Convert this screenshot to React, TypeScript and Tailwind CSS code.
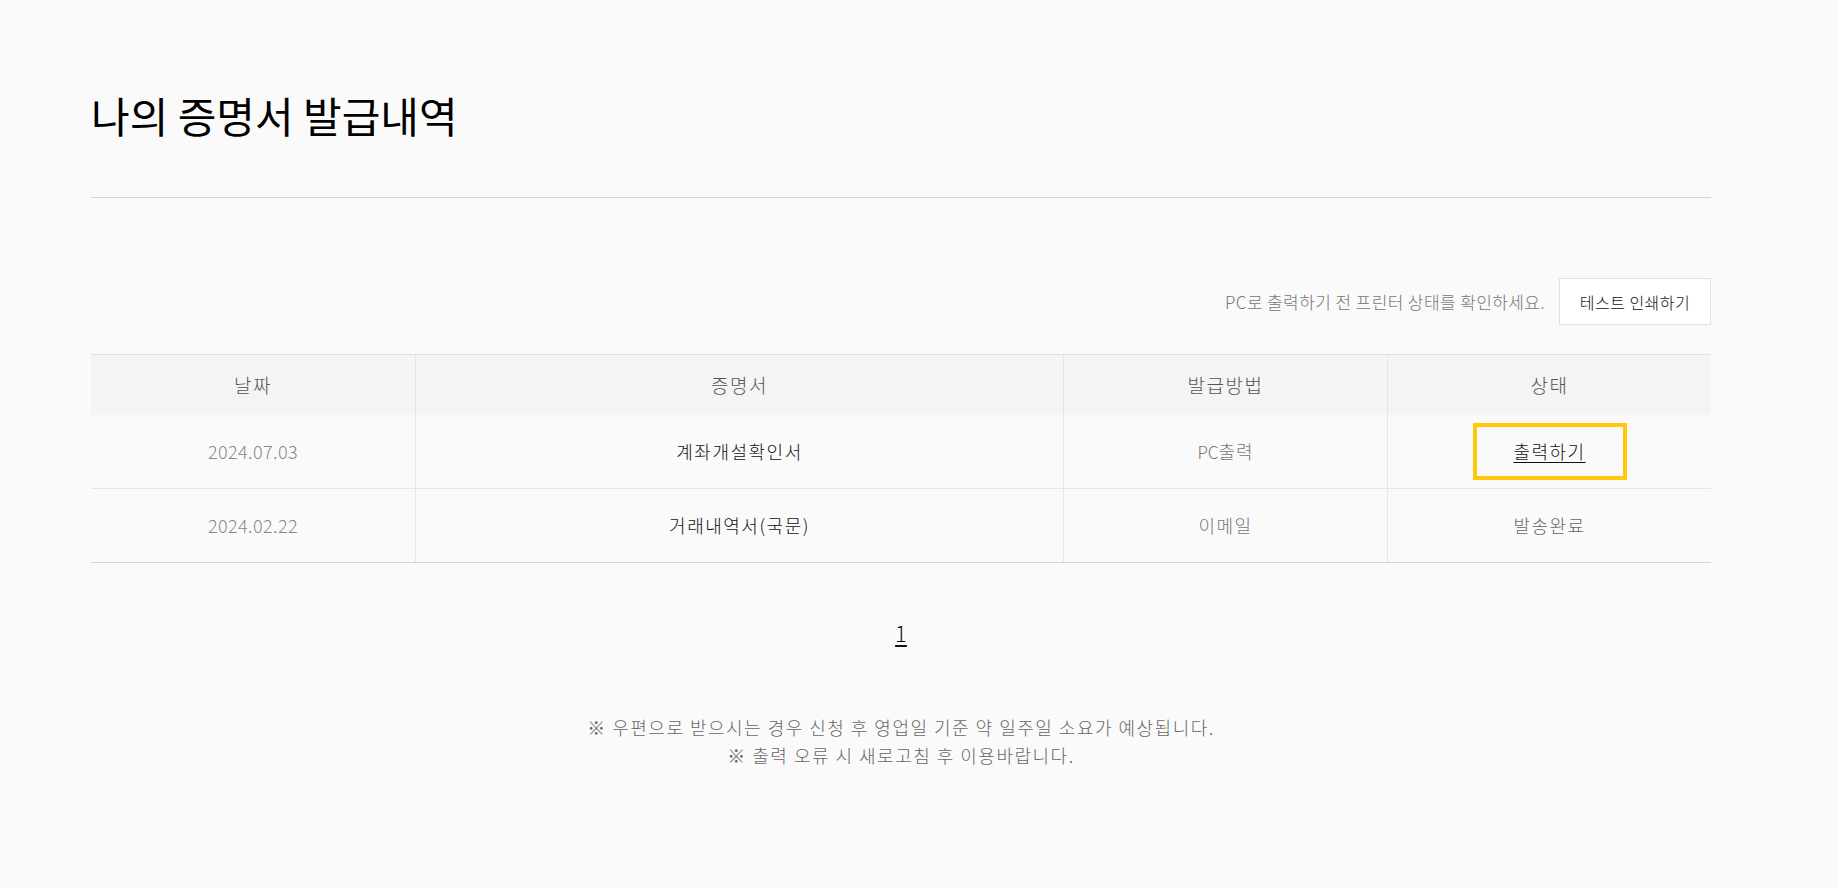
import React from "react";

const rows = [
  { date: "2024.07.03", name: "계좌개설확인서", method: "PC출력", status: "print" },
  { date: "2024.02.22", name: "거래내역서(국문)", method: "이메일", status: "발송완료" },
];

function Method({ value }: { value: string }) {
  if (value.startsWith("PC")) {
    return (
      <span className="tracking-[0px]">
        <span className="text-[17px] tracking-[0px]">PC</span>
        <span className="tracking-[1px]">{value.slice(2)}</span>
      </span>
    );
  }
  return <span>{value}</span>;
}

export default function App() {
  return (
    <div className="min-h-screen bg-[#fafafa] font-['Noto_Sans_CJK_KR','Noto_Sans',sans-serif] text-[#111]">
      <div className="ml-[91px] w-[1620px] pt-[94px] pb-[100px]">
        <h1 className="text-[42px] leading-[42px] font-normal text-black">나의 증명서 발급내역</h1>
        <div className="mt-[61px] border-t border-[#d4d4d4]" />

        <div className="mt-[80px] flex items-center justify-end gap-[14px]">
          <span className="text-[17px] tracking-[0.4px] font-light text-[#777]">
            PC로 출력하기 전 프린터 상태를 확인하세요.
          </span>
          <button className="h-[47px] w-[152px] border border-[#e2e2e2] bg-white text-[16px] tracking-[0.5px] font-light text-[#111]">
            테스트 인쇄하기
          </button>
        </div>

        <div className="mt-[29px] border-t border-[#e0e0e0]">
          <div className="grid h-[60px] grid-cols-[324px_648px_324px_324px] bg-[#f4f4f4] text-[19px] tracking-[1.5px] font-light text-[#555]">
            <div className="flex items-center justify-center">날짜</div>
            <div className="flex items-center justify-center border-l border-[#e6e6e6]">증명서</div>
            <div className="flex items-center justify-center border-l border-[#e6e6e6]">발급방법</div>
            <div className="flex items-center justify-center border-l border-[#e6e6e6]">상태</div>
          </div>
          {rows.map((r, i) => (
            <div
              key={r.date}
              className={`grid h-[74px] grid-cols-[324px_648px_324px_324px] text-[18px] font-light ${
                i === rows.length - 1 ? "border-b border-[#d6d6d6]" : "border-b border-[#e6e6e6]"
              }`}
            >
              <div className="flex items-center justify-center tracking-[0.4px] text-[#888]">{r.date}</div>
              <div className="flex items-center justify-center border-l border-[#e6e6e6] tracking-[1.5px] text-[#111]">
                {r.name}
              </div>
              <div className="flex items-center justify-center border-l border-[#e6e6e6] tracking-[1.5px] text-[#777]">
                <Method value={r.method} />
              </div>
              <div className="flex items-center justify-center border-l border-[#e6e6e6] tracking-[1.5px] text-[#666]">
                {r.status === "print" ? (
                  <span className="flex h-[57px] w-[154px] items-center justify-center border-[4px] border-[#ffc80b]">
                    <span className="text-[#111] underline underline-offset-[3px]">출력하기</span>
                  </span>
                ) : (
                  r.status
                )}
              </div>
            </div>
          ))}
        </div>

        <div className="mt-[55px] flex justify-center">
          <span className="text-[22px] leading-[28px] font-light text-[#111] underline underline-offset-[3px]">1</span>
        </div>

        <div className="mt-[67px] flex flex-col items-center text-[18px] leading-[28px] tracking-[1.5px] font-light text-[#666]">
          <p>※ 우편으로 받으시는 경우 신청 후 영업일 기준 약 일주일 소요가 예상됩니다.</p>
          <p>※ 출력 오류 시 새로고침 후 이용바랍니다.</p>
        </div>
      </div>
    </div>
  );
}
